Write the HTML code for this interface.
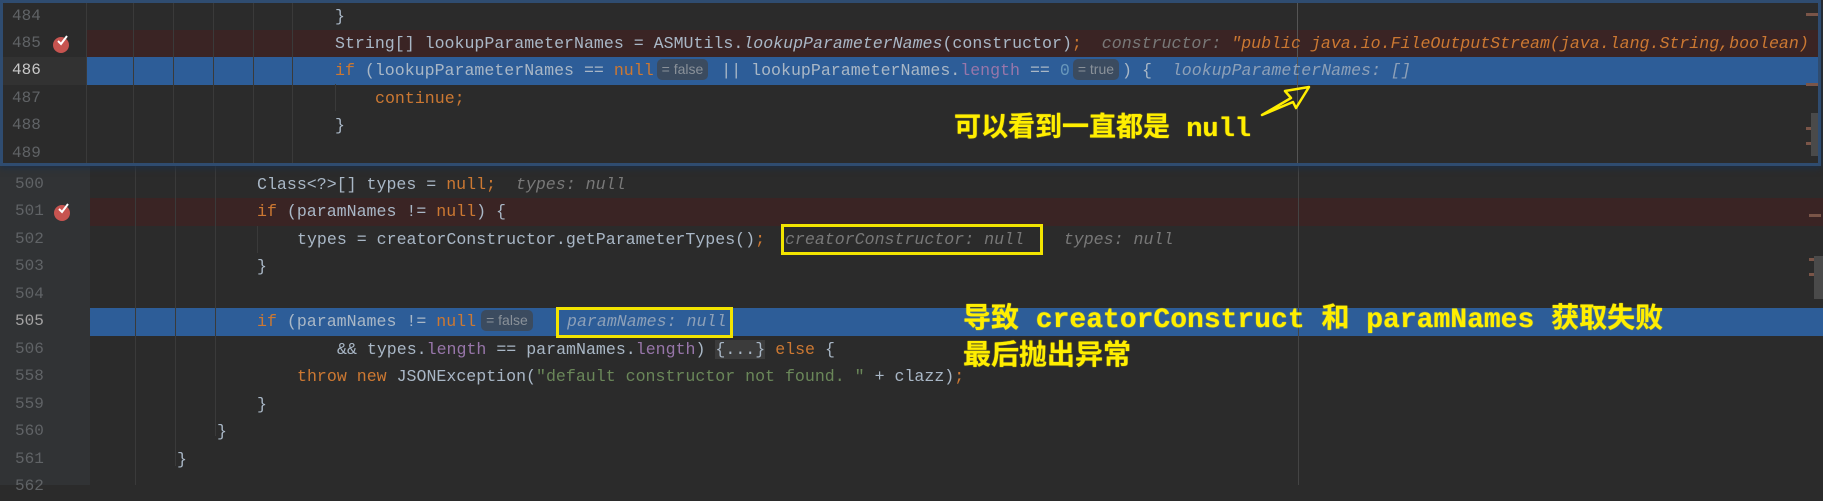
<!DOCTYPE html>
<html><head><meta charset="utf-8"><style>
*{margin:0;padding:0;box-sizing:border-box}
body{width:1823px;height:485px;background:#2b2b2b;overflow:hidden;position:relative;font-family:"Liberation Mono",monospace;font-size:16.6px;color:#a9b7c6}
.row{position:absolute;left:0;width:1823px;height:27.5px;line-height:27.5px;white-space:pre}
.ln{position:absolute;color:#606366;font-size:16px}
.code{position:absolute;top:0}
.k{color:#cc7832}.s{color:#6a8759}.f{color:#9876aa}.i{font-style:italic}
.h{color:#787878;font-style:italic}
.pill{display:inline-block;background:#3b4b5f;color:#8a9199;border-radius:5px;height:21px;line-height:21px;font-size:14px;padding:0 5px;margin:0 3px;vertical-align:1px;font-family:"Liberation Sans",sans-serif}
.guide{position:absolute;width:1px;background:#3a3a3a}
.ann{position:absolute;color:#ffee00;font-family:"Liberation Mono","Noto Sans CJK SC",monospace;font-weight:bold;white-space:pre;text-shadow:0 0 1px #ffee00}
.box{position:absolute;border:3px solid #f2e400}
.mark{position:absolute;height:3px;width:12px;background:#7a5548}
</style></head><body>
<!-- bottom area -->
<div style="position:absolute;left:0;top:166px;width:90px;height:319px;background:#313335"></div>
<div style="position:absolute;left:90px;top:198px;width:1733px;height:28px;background:#3a2424"></div>
<div style="position:absolute;left:90px;top:308px;width:1733px;height:28px;background:#2d5d98"></div>
<div class="guide" style="left:135px;top:166px;height:319px"></div>
<div class="guide" style="left:175px;top:166px;height:300px"></div>
<div class="guide" style="left:215px;top:166px;height:270px"></div>
<div class="guide" style="left:257px;top:226px;height:27px"></div>
<div style="position:absolute;left:1298px;top:166px;width:1px;height:319px;background:#444"></div>

<div class="row" style="top:171px"><span class="ln" style="left:15px">500</span><span class="code" style="left:257px">Class&lt;?&gt;[] types = <span class="k">null;</span>  <span class="h">types: null</span></span></div>
<div class="row" style="top:198px"><span class="ln" style="left:15px">501</span><span class="code" style="left:257px"><span class="k">if</span> (paramNames != <span class="k">null</span>) {</span></div>
<div class="row" style="top:226px"><span class="ln" style="left:15px">502</span><span class="code" style="left:297px">types = creatorConstructor.getParameterTypes()<span class="k">;</span>  <span class="h">creatorConstructor: null</span>    <span class="h">types: null</span></span></div>
<div class="row" style="top:253px"><span class="ln" style="left:15px">503</span><span class="code" style="left:257px">}</span></div>
<div class="row" style="top:281px"><span class="ln" style="left:15px">504</span></div>
<div class="row" style="top:308px"><span class="ln" style="left:15px;color:#a4a3a3">505</span><span class="code" style="left:257px"><span class="k">if</span> (paramNames != <span class="k">null</span><span class="pill" style="margin-left:5px">= false</span></span><span class="code h" style="left:567px;color:#8da0b8">paramNames: null</span></div>
<div class="row" style="top:336px"><span class="ln" style="left:15px">506</span><span class="code" style="left:337px">&amp;&amp; types.<span class="f">length</span> == paramNames.<span class="f">length</span>) <span style="background:#3b3b3b">{...}</span> <span class="k">else</span> {</span></div>
<div class="row" style="top:363px"><span class="ln" style="left:15px">558</span><span class="code" style="left:297px"><span class="k">throw new</span> JSONException(<span class="s">"default constructor not found. "</span> + clazz)<span class="k">;</span></span></div>
<div class="row" style="top:391px"><span class="ln" style="left:15px">559</span><span class="code" style="left:257px">}</span></div>
<div class="row" style="top:418px"><span class="ln" style="left:15px">560</span><span class="code" style="left:217px">}</span></div>
<div class="row" style="top:446px"><span class="ln" style="left:15px">561</span><span class="code" style="left:177px">}</span></div>
<div class="row" style="top:473px"><span class="ln" style="left:15px">562</span></div>
<svg style="position:absolute;left:52px;top:201px" width="22" height="22"><circle cx="10" cy="12" r="8" fill="#c75450"/><path d="M7 8l3 3 6-8" stroke="#fff" stroke-width="2" fill="none"/></svg>
<div class="box" style="left:781px;top:224px;width:262px;height:31px"></div>
<div class="box" style="left:556px;top:307px;width:177px;height:31px"></div>
<div class="mark" style="left:1809px;top:214px"></div>
<div class="mark" style="left:1809px;top:258px"></div>
<div class="mark" style="left:1809px;top:273px"></div>
<div style="position:absolute;left:1814px;top:256px;width:9px;height:43px;background:#4a4a4a"></div>

<!-- top panel -->
<div style="position:absolute;left:0;top:0;width:1821px;height:166px;background:#2b2b2b;border:3px solid #2f4c70;box-shadow:0 2px 6px #1e2f45"></div>
<div style="position:absolute;left:87px;top:30px;width:1731px;height:28px;background:#3a2424"></div>
<div style="position:absolute;left:87px;top:57px;width:1731px;height:28px;background:#2d5d98"></div>
<div style="position:absolute;left:3px;top:57px;width:84px;height:28px;background:#323232"></div>
<div style="position:absolute;left:86px;top:3px;width:1px;height:160px;background:#3a3a3a"></div>
<div class="guide" style="left:133px;top:3px;height:160px"></div>
<div class="guide" style="left:173px;top:3px;height:160px"></div>
<div class="guide" style="left:213px;top:3px;height:160px"></div>
<div class="guide" style="left:253px;top:3px;height:160px"></div>
<div class="guide" style="left:292px;top:3px;height:160px"></div>
<div class="guide" style="left:335px;top:84px;height:27px"></div>
<div style="position:absolute;left:1297px;top:3px;width:1px;height:160px;background:#555"></div>

<div class="row" style="top:3px"><span class="ln" style="left:12px">484</span><span class="code" style="left:335px">}</span></div>
<div class="row" style="top:30px"><span class="ln" style="left:12px">485</span><span class="code" style="left:335px">String[] lookupParameterNames = ASMUtils.<span class="i">lookupParameterNames</span>(constructor)<span class="k">;</span>  <span class="h">constructor: </span><span class="k i">"public java.io.FileOutputStream(java.lang.String,boolean)</span></span></div>
<div class="row" style="top:57px"><span class="ln" style="left:12px;color:#c8c8c8">486</span><span class="code" style="left:335px"><span class="k">if</span> (lookupParameterNames == <span class="k">null</span><span class="pill">= false</span> || lookupParameterNames.<span class="f">length</span> == <span style="color:#6897bb">0</span><span class="pill">= true</span>) {  <span class="h" style="color:#8da0b8">lookupParameterNames: []</span></span></div>
<div class="row" style="top:85px"><span class="ln" style="left:12px">487</span><span class="code" style="left:375px"><span class="k">continue;</span></span></div>
<div class="row" style="top:112px"><span class="ln" style="left:12px">488</span><span class="code" style="left:335px">}</span></div>
<div class="row" style="top:140px"><span class="ln" style="left:12px">489</span></div>
<svg style="position:absolute;left:51px;top:33px" width="22" height="22"><circle cx="10" cy="12" r="8" fill="#c75450"/><path d="M7 8l3 3 6-8" stroke="#fff" stroke-width="2" fill="none"/></svg>
<div class="mark" style="left:1806px;top:13px"></div>
<div class="mark" style="left:1806px;top:83px"></div>
<div class="mark" style="left:1806px;top:127px"></div>
<div class="mark" style="left:1806px;top:142px"></div>
<div style="position:absolute;left:1811px;top:113px;width:7px;height:43px;background:#4a4a4a"></div>

<!-- annotations -->
<div class="ann" style="left:954px;top:112px;font-size:27px;line-height:36px">可以看到一直都是 null</div>
<svg style="position:absolute;left:0;top:0" width="1823" height="485"><polygon points="1262,115 1291,98 1285,91 1309,87 1296,108 1293,102" fill="none" stroke="#ffee00" stroke-width="2.5" stroke-linejoin="round"/></svg>
<div class="ann" style="left:963px;top:302px;font-size:28px;line-height:37px">导致 creatorConstruct 和 paramNames 获取失败
最后抛出异常</div>
</body></html>
